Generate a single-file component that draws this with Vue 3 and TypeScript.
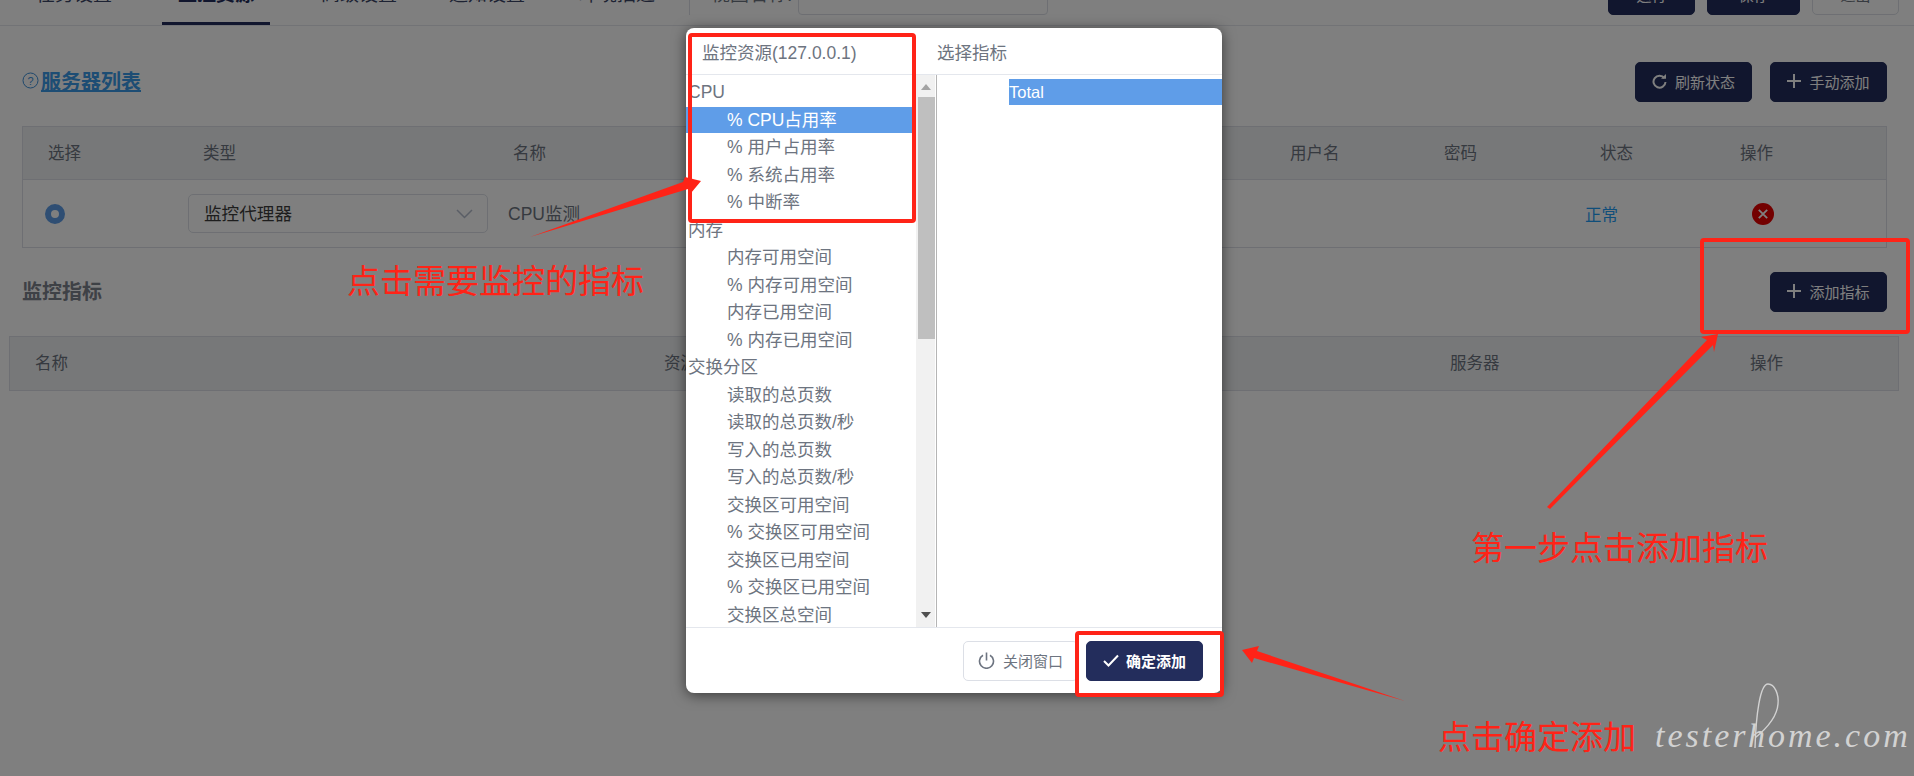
<script setup lang="ts">
const tabs = ['任务设置', '监控资源', '高级设置', '通知设置', '环境描述']

const groups: { name: string; items: string[] }[] = [
  { name: 'CPU', items: ['% CPU占用率', '% 用户占用率', '% 系统占用率', '% 中断率'] },
  { name: '内存', items: ['内存可用空间', '% 内存可用空间', '内存已用空间', '% 内存已用空间'] },
  {
    name: '交换分区',
    items: [
      '读取的总页数',
      '读取的总页数/秒',
      '写入的总页数',
      '写入的总页数/秒',
      '交换区可用空间',
      '% 交换区可用空间',
      '交换区已用空间',
      '% 交换区已用空间',
      '交换区总空间',
    ],
  },
]

const selected = '% CPU占用率'
</script>

<template>
  <div class="screen">
    <header class="topbar">
      <nav class="tabs">
        <span v-for="(t, i) in tabs" :key="t" class="tab" :class="{ active: i === 1 }">{{ t }}</span>
      </nav>
      <div class="viewname">
        <span class="viewlabel">视图名称:</span>
        <span class="viewinput"></span>
      </div>
      <div class="topbtns">
        <button class="btn top-run">运行</button>
        <button class="btn top-save">保存</button>
        <button class="btn plain top-quit">退出</button>
      </div>
    </header>

    <div class="sechead first">
      <div class="linktitle">
        <svg class="help" width="17" height="17" viewBox="0 0 17 17">
          <circle cx="8.5" cy="8.5" r="7.5" fill="none" stroke="#3a8ed8" stroke-width="1" />
          <text x="8.5" y="12.5" text-anchor="middle" font-size="11" fill="#3a8ed8">?</text>
        </svg>
        <a class="link">服务器列表</a>
      </div>
      <div class="btnrow">
        <button class="btn">
          <svg width="15" height="15" viewBox="0 0 15 15">
            <path d="M12.4 4.2A6 6 0 1 0 13.5 8" fill="none" stroke="#fff" stroke-width="2" />
            <path d="M9 4.8h5V0z" fill="#fff" />
          </svg>
          刷新状态
        </button>
        <button class="btn">
          <svg width="14" height="14" viewBox="0 0 14 14"><path d="M7 0v14M0 7h14" stroke="#fff" stroke-width="2" /></svg>
          手动添加
        </button>
      </div>
    </div>

    <div class="table servers">
      <div class="row hrow servers-grid">
        <span class="h1">选择</span>
        <span class="h2">类型</span>
        <span class="h3">名称</span>
        <span class="h4">用户名</span>
        <span class="h5">密码</span>
        <span class="h6">状态</span>
        <span class="h7">操作</span>
      </div>
      <div class="row brow servers-grid">
        <span class="radio"></span>
        <div class="select">
          <span class="seltext">监控代理器</span>
          <svg width="17" height="10" viewBox="0 0 17 10"><path d="M1 1l7.5 7.5L16 1" fill="none" stroke="#b4bccc" stroke-width="1.5" /></svg>
        </div>
        <span class="cname">CPU监测</span>
        <span></span>
        <span></span>
        <span class="ok">正常</span>
        <span class="del">
          <svg width="22" height="22" viewBox="0 0 22 22">
            <circle cx="11" cy="11" r="11" fill="#e60000" />
            <path d="M6.8 6.8l8.4 8.4M15.2 6.8l-8.4 8.4" stroke="#fff" stroke-width="1.8" />
          </svg>
        </span>
      </div>
    </div>

    <div class="sechead second">
      <h3 class="sectitle">监控指标</h3>
      <button class="btn">
        <svg width="14" height="14" viewBox="0 0 14 14"><path d="M7 0v14M0 7h14" stroke="#fff" stroke-width="2" /></svg>
        添加指标
      </button>
    </div>

    <div class="table metrics">
      <div class="row hrow metrics-grid">
        <span>名称</span>
        <span>资源</span>
        <span>服务器</span>
        <span>操作</span>
      </div>
    </div>

    <div class="mask"></div>

    <div class="modal">
      <div class="mhead">
        <div class="mtitle left">监控资源(127.0.0.1)</div>
        <div class="mtitle">选择指标</div>
      </div>
      <div class="mbody">
        <div class="listbox">
          <div class="options">
            <template v-for="g in groups" :key="g.name">
              <div class="opt group">{{ g.name }}</div>
              <div v-for="it in g.items" :key="it" class="opt item" :class="{ on: it === selected }">{{ it }}</div>
            </template>
          </div>
          <div class="scroll">
            <i class="up"></i>
            <i class="thumb"></i>
            <i class="down"></i>
          </div>
        </div>
        <div class="counters">
          <div class="total">Total</div>
        </div>
      </div>
      <div class="mfoot">
        <button class="btn plain close">
          <svg width="17" height="17" viewBox="0 0 17 17">
            <path d="M5 3.2a7 7 0 1 0 7 0" fill="none" stroke="#6d7480" stroke-width="1.6" />
            <path d="M8.5 0.5v8" stroke="#6d7480" stroke-width="1.6" />
          </svg>
          关闭窗口
        </button>
        <button class="btn confirm">
          <svg width="16" height="13" viewBox="0 0 16 13"><path d="M1 7l4.5 4.5L15 1.5" fill="none" stroke="#fff" stroke-width="2" /></svg>
          确定添加
        </button>
      </div>
    </div>

    <!-- red notes drawn over the screenshot -->
    <i class="mark m1"></i>
    <i class="mark m2"></i>
    <i class="mark m3"></i>
    <svg class="arrows" width="1914" height="776" viewBox="0 0 1914 776">
      <polygon points="530,237 683,182 685,177 701,181 691,193 688,189" fill="#ff2317" />
      <polygon points="1547,507 1707,340 1701,337 1718,334 1714,352 1713,345 1550,509" fill="#ff2317" />
      <polygon points="1405,701 1257,651 1259,646 1242,650 1252,663 1254,658" fill="#ff2317" />
      <path
        d="M1755 748C1756 715 1760 684 1768 684C1775 684 1779 695 1778 704C1777 718 1766 729 1755 738"
        fill="none"
        stroke="#d2d2d2"
        stroke-width="1.4"
      />
    </svg>
    <span class="note n1">点击需要监控的指标</span>
    <span class="note n2">第一步点击添加指标</span>
    <span class="note n3">点击确定添加</span>
    <span class="watermark">testerhome.com</span>
  </div>
</template>

<style>
html,
body {
  margin: 0;
  overflow: hidden;
  background: #fff;
}
</style>

<style scoped>
.screen {
  position: relative;
  width: 1914px;
  height: 776px;
  overflow: hidden;
  background: #fff;
  font-family: "Liberation Sans", "Noto Sans CJK SC", sans-serif;
  font-size: 16.5px;
  color: #6d7480;
}

.btn {
  display: inline-flex;
  align-items: center;
  justify-content: center;
  gap: 8px;
  width: 117px;
  height: 40px;
  padding: 0 0 2px;
  border: 1px solid #232d5c;
  border-radius: 5px;
  background: #232d5c;
  color: #fff;
  font-family: inherit;
  font-size: 15px;
}
.btn.plain {
  background: #fff;
  border-color: #dcdfe6;
  color: #6d7480;
}

/* top bar, scrolled partly off the page */
.topbar {
  display: flex;
  height: 50px;
  margin-top: -25px;
  border-bottom: 1px solid #e4e7ed;
}
.tabs {
  display: flex;
  width: 689px;
  padding-left: 36px;
  box-sizing: border-box;
}
.tab {
  position: relative;
  width: 78px;
  margin-right: 66px;
  padding-top: 6px;
  font-size: 19px;
  line-height: 28px;
  white-space: nowrap;
  color: #3a4466;
}
.tab:nth-child(2) {
  margin-right: 67px;
}
.tab:nth-child(3) {
  margin-right: 52px;
}
.tab:nth-child(4) {
  margin-right: 54px;
}
.tab.active {
  font-weight: bold;
  color: #232d5c;
}
.tab.active::after {
  content: "";
  position: absolute;
  left: -16px;
  right: -16px;
  top: 47px;
  height: 3px;
  background: #232d5c;
}
.viewname {
  display: flex;
  height: 40px;
  padding-left: 21px;
  border-left: 1px solid #dcdfe6;
}
.viewlabel {
  width: 87px;
  padding-top: 6px;
  font-size: 19px;
  line-height: 28px;
  white-space: nowrap;
}
.viewinput {
  width: 248px;
  height: 38px;
  border: 1px solid #dcdfe6;
  border-radius: 4px;
}
.topbtns {
  display: flex;
  gap: 12px;
  margin-left: auto;
  padding-right: 15px;
}
.btn.top-run {
  width: 87px;
}
.btn.top-save {
  width: 93px;
}
.btn.top-quit {
  width: 87px;
}

.sechead {
  display: flex;
  align-items: center;
  justify-content: space-between;
  height: 40px;
  padding: 0 27px 0 22px;
}
.sechead.first {
  margin-top: 36px;
}
.sechead.second {
  margin-top: 24px;
}
.linktitle {
  display: flex;
  align-items: center;
  gap: 1px;
  padding-bottom: 3px;
}
.link {
  margin-left: 1px;
  font-size: 20px;
  font-weight: bold;
  color: #3a9ae8;
  text-decoration: underline;
}
.btnrow {
  display: flex;
  gap: 18px;
}
.sectitle {
  margin: 0 0 3px;
  font-size: 20px;
  font-weight: bold;
  color: #7c828c;
}

.table {
  border: 1px solid #dcdfe6;
}
.table.servers {
  margin: 24px 27px 0 22px;
}
.table.metrics {
  margin: 24px 15px 0 9px;
}
.row {
  display: grid;
  align-items: center;
}
.hrow {
  box-sizing: border-box;
  height: 53px;
  padding-bottom: 3px;
  background: #eff0f2;
}
.servers .hrow {
  border-bottom: 1px solid #dcdfe6;
}
.brow {
  height: 67px;
}
.servers-grid {
  grid-template-columns: 165px 320px 777px 155px 140px 155px 1fr;
}
.metrics-grid {
  grid-template-columns: 629px 786px 300px 1fr;
  padding-left: 25px;
}
.h1 {
  padding-left: 25px;
}
.h2 {
  padding-left: 15px;
}
.h3,
.h4,
.h7 {
  padding-left: 5px;
}
.h5 {
  padding-left: 4px;
}
.h6 {
  padding-left: 20px;
}
.radio {
  width: 8px;
  height: 8px;
  margin-left: 22px;
  border: 6px solid #5e9de6;
  border-radius: 50%;
  background: #fff;
}
.select {
  display: flex;
  align-items: center;
  justify-content: space-between;
  box-sizing: border-box;
  width: 300px;
  height: 39px;
  padding: 0 14px 0 15px;
  border: 1px solid #dcdfe6;
  border-radius: 5px;
  font-size: 17.6px;
  color: #3c3c3c;
}
.seltext {
  padding-bottom: 3px;
}
.cname {
  padding-bottom: 3px;
  font-size: 17.5px;
}
.ok {
  padding-left: 5px;
  color: #1f9cf5;
}
.del {
  display: flex;
  padding-left: 17px;
}

.mask {
  position: absolute;
  inset: 0;
  background: rgba(0, 0, 0, 0.5);
}

/* dialog */
.modal {
  position: absolute;
  left: 686px;
  top: 28px;
  display: flex;
  flex-direction: column;
  width: 536px;
  height: 665px;
  overflow: hidden;
  border-radius: 8px;
  background: #fff;
  box-shadow: 0 2px 14px rgba(0, 0, 0, 0.55);
  font-size: 17.5px;
}
.mhead {
  display: flex;
  align-items: center;
  flex: none;
  height: 47px;
  border-bottom: 1px solid #e4e7ed;
  box-sizing: border-box;
}
.mtitle {
  white-space: nowrap;
}
.mtitle.left {
  width: 235px;
  padding-left: 16px;
  box-sizing: border-box;
}
.mtitle:not(.left) {
  margin-left: 16px;
}
.mbody {
  display: flex;
  height: 552px;
  flex: none;
}
.listbox {
  display: flex;
  width: 251px;
  flex: none;
  border-right: 1px solid #b5b5b5;
  box-sizing: border-box;
}
.options {
  display: flex;
  flex-direction: column;
  gap: 1.5px;
  flex: 1;
  min-width: 0;
  overflow: hidden;
  padding-top: 4px;
}
.opt {
  flex: none;
  height: 26px;
  line-height: 26px;
  white-space: nowrap;
}
.group {
  padding-left: 2px;
}
.item {
  padding-left: 41px;
}
.item.on {
  background: #5f9de8;
  color: #fff;
}
.scroll {
  position: relative;
  width: 19px;
  margin-right: 1px;
  flex: none;
  background: #f1f1f1;
}
.thumb {
  position: absolute;
  left: 2px;
  right: 0;
  top: 22px;
  height: 242px;
  background: #bfbfbf;
}
.up,
.down {
  position: absolute;
  left: 5px;
  width: 0;
  height: 0;
  border-left: 5px solid transparent;
  border-right: 5px solid transparent;
}
.up {
  top: 9px;
  border-bottom: 6px solid #a3a3a3;
}
.down {
  bottom: 9px;
  border-top: 6px solid #505050;
}
.counters {
  flex: 1;
  padding: 4px 0 0 72px;
}
.total {
  height: 26px;
  line-height: 26px;
  background: #5f9de8;
  color: #fff;
  font-size: 16.5px;
}
.mfoot {
  display: flex;
  align-items: flex-start;
  justify-content: flex-end;
  gap: 8px;
  flex: 1;
  padding: 13px 19px 0 0;
  border-top: 1px solid #e4e7ed;
}
.btn.close {
  width: 115px;
}
.btn.confirm {
  gap: 7px;
  font-weight: bold;
}

/* annotations */
.mark {
  position: absolute;
  box-sizing: border-box;
  border: 4px solid #ff2317;
  border-radius: 4px;
}
.m1 {
  left: 688px;
  top: 33px;
  width: 228px;
  height: 190px;
}
.m2 {
  left: 1700px;
  top: 238px;
  width: 210px;
  height: 96px;
}
.m3 {
  left: 1075px;
  top: 631px;
  width: 149px;
  height: 66px;
}
.arrows {
  position: absolute;
  left: 0;
  top: 0;
}
.note {
  position: absolute;
  font-size: 33px;
  line-height: 40px;
  color: #ff2317;
  white-space: nowrap;
}
.n1 {
  left: 347px;
  top: 262px;
}
.n2 {
  left: 1471px;
  top: 529px;
}
.n3 {
  left: 1438px;
  top: 718px;
}
.watermark {
  position: absolute;
  left: 1655px;
  top: 716px;
  font-family: "Liberation Serif", serif;
  font-style: italic;
  font-size: 34px;
  line-height: 40px;
  letter-spacing: 3px;
  color: #d2d2d2;
  white-space: nowrap;
}
</style>
